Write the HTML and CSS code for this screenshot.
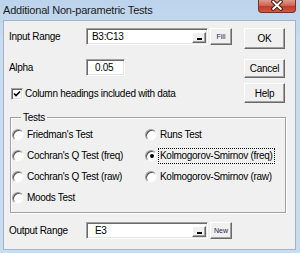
FILE: index.html
```html
<!DOCTYPE html>
<html>
<head>
<meta charset="utf-8">
<link rel="stylesheet" href="styles.css">
</head>
<body>
<div class="window">
  <div class="titlebar">
    <span class="title">Additional Non-parametric Tests</span>
    <div class="close">
      <svg width="38" height="13" viewBox="0 0 38 13">
        <path d="M15.5 1.5 L23.5 9 M23.5 1.5 L15.5 9" stroke="#4a1a14" stroke-width="4" stroke-linecap="round" fill="none"/>
        <path d="M15.5 1.5 L23.5 9 M23.5 1.5 L15.5 9" stroke="#ffffff" stroke-width="2" stroke-linecap="round" fill="none"/>
      </svg>
    </div>
  </div>
  <div class="client">
    <div class="top">
      <div class="fields">
        <div class="row">
          <span class="lbl">Input Range</span>
          <div class="textbox wide"><span class="val v-input">B3:C13</span><span class="pick"><i></i></span></div>
          <span class="mini">Fill</span>
        </div>
        <div class="row r-alpha">
          <span class="lbl">Alpha</span>
          <div class="textbox narrow"><span class="val v-alpha">0.05</span></div>
        </div>
        <div class="check-row">
          <span class="checkbox">
            <svg width="10" height="10" viewBox="0 0 10 10"><path d="M2 4.5 L4 6.5 L8 2.5" stroke="#000" stroke-width="1.6" fill="none"/></svg>
          </span>
          <span>Column headings included with data</span>
        </div>
      </div>
      <div class="buttons">
        <span class="btn b-ok">OK</span>
        <span class="btn b-cancel">Cancel</span>
        <span class="btn b-help">Help</span>
      </div>
    </div>
    <div class="group">
      <span class="legend">Tests</span>
      <div class="options">
        <div class="opt"><span class="radio"></span><span>Friedman's Test</span></div>
        <div class="opt"><span class="radio"></span><span>Runs Test</span></div>
        <div class="opt"><span class="radio"></span><span>Cochran's Q Test (freq)</span></div>
        <div class="opt"><span class="radio on"></span><span class="focus">Kolmogorov-Smirnov (freq)</span></div>
        <div class="opt"><span class="radio"></span><span>Cochran's Q Test (raw)</span></div>
        <div class="opt"><span class="radio"></span><span>Kolmogorov-Smirnov (raw)</span></div>
        <div class="opt"><span class="radio"></span><span>Moods Test</span></div>
      </div>
    </div>
    <div class="row r-output">
      <span class="lbl">Output Range</span>
      <div class="textbox wide"><span class="val v-output">E3</span><span class="pick"><i></i></span></div>
      <span class="mini">New</span>
    </div>
  </div>
</div>
</body>
</html>
```

FILE: styles.css
```css
html, body {
  margin: 0;
  padding: 0;
  background: #c6daef;
}
.window {
  width: 300px;
  height: 253px;
  background: linear-gradient(#bcd3ec, #c9dcf0 40px, #c9dcf0);
  font-family: "Liberation Sans", Arial, sans-serif;
  font-size: 10px;
  letter-spacing: -0.3px;
  color: #000;
  overflow: hidden;
}
.titlebar {
  height: 20px;
  display: flex;
  align-items: flex-start;
}
.title {
  font-size: 11px;
  letter-spacing: -0.2px;
  line-height: 14px;
  padding: 3px 0 0 3px;
  color: #1a1a1a;
}
.close {
  margin-left: auto;
  margin-right: 4px;
  width: 38px;
  height: 13px;
  box-sizing: border-box;
  border: 1px solid #7a2e24;
  border-top: none;
  border-radius: 0 0 4px 4px;
  background: linear-gradient(#e09a8a, #d06656 45%, #c23a2a 55%, #d05a44);
  display: flex;
}
.close svg {
  margin-left: -1px;
}
.client {
  width: 293px;
  height: 230px;
  margin-left: 3px;
  box-sizing: border-box;
  border: 1px solid #a3b2c4;
  background: #f0f0f0;
}
.top {
  display: flex;
  padding-top: 7px;
}
.fields {
  width: 240px;
}
.row {
  display: flex;
  align-items: center;
  height: 17px;
}
.lbl {
  width: 77px;
  margin-left: 5px;
  flex: none;
}
.textbox {
  height: 17px;
  box-sizing: border-box;
  background: #fff;
  border-style: solid;
  border-width: 1px;
  border-color: #a0a0a0 #ffffff #ffffff #a0a0a0;
  box-shadow: inset 1px 1px 0 #696969, inset -1px -1px 0 #e3e3e3;
  display: flex;
  align-items: center;
  flex: none;
}
.textbox.wide { width: 122px; }
.textbox.narrow { width: 39px; }
.val {
  flex: 1;
  line-height: 13px;
}
.v-input { padding-left: 5px; }
.v-alpha { padding-left: 8px; }
.v-output { padding-left: 8px; }
.pick {
  width: 14px;
  height: 11px;
  align-self: flex-end;
  margin: 0 1px 1px 0;
  box-sizing: border-box;
  background: #f0f0f0;
  border-style: solid;
  border-width: 1px;
  border-color: #ffffff #696969 #696969 #ffffff;
  box-shadow: inset -1px -1px 0 #a0a0a0;
  display: flex;
  justify-content: center;
  align-items: flex-end;
}
.pick i {
  display: block;
  width: 5px;
  height: 2px;
  background: #000;
  margin-bottom: 2px;
}
.mini {
  width: 22px;
  height: 17px;
  margin-left: 2px;
  box-sizing: border-box;
  background: #f0f0f0;
  border-style: solid;
  border-width: 1px;
  border-color: #ffffff #696969 #696969 #ffffff;
  box-shadow: inset -1px -1px 0 #a0a0a0;
  font-size: 7px;
  letter-spacing: 0;
  color: #1c2450;
  display: flex;
  align-items: center;
  justify-content: center;
  flex: none;
}
.r-alpha { margin-top: 14px; }
.check-row {
  display: flex;
  align-items: center;
  height: 13px;
  margin-top: 11px;
}
.checkbox {
  width: 12px;
  height: 12px;
  margin-left: 7px;
  margin-right: 2px;
  box-sizing: border-box;
  background: #fff;
  border-style: solid;
  border-width: 1px;
  border-color: #a0a0a0 #ffffff #ffffff #a0a0a0;
  box-shadow: inset 1px 1px 0 #696969, inset -1px -1px 0 #e3e3e3;
  display: flex;
  align-items: center;
  justify-content: center;
}
.buttons {
  width: 41px;
  display: flex;
  flex-direction: column;
}
.btn {
  width: 41px;
  box-sizing: border-box;
  background: #f0f0f0;
  border-style: solid;
  border-width: 1px;
  border-color: #ffffff #696969 #696969 #ffffff;
  box-shadow: inset -1px -1px 0 #a0a0a0;
  display: flex;
  align-items: center;
  justify-content: center;
}
.b-ok { height: 21px; }
.b-cancel { height: 19px; margin-top: 10px; }
.b-help { height: 20px; margin-top: 5px; }
.group {
  position: relative;
  margin: 14px 0 0 6px;
  width: 276px;
  height: 96px;
  box-sizing: border-box;
  border: 1px solid #a0a0a0;
  box-shadow: inset 1px 1px 0 #ffffff, 1px 1px 0 #ffffff;
}
.legend {
  position: absolute;
  top: -7px;
  left: 10px;
  padding: 0 2px;
  line-height: 13px;
  background: #f0f0f0;
}
.options {
  display: grid;
  grid-template-columns: 133px 1fr;
  grid-auto-rows: 21px;
  padding: 6px 0 0 1px;
}
.opt {
  display: flex;
  align-items: center;
}
.radio {
  width: 12px;
  height: 12px;
  margin-right: 3px;
  box-sizing: border-box;
  border-radius: 50%;
  background: #fff;
  border-style: solid;
  border-width: 1px;
  border-color: #9a9a9a #f4f4f4 #f4f4f4 #9a9a9a;
  box-shadow: inset 1px 1px 0 #505050;
  display: flex;
  align-items: center;
  justify-content: center;
  flex: none;
}
.radio.on::after {
  content: "";
  width: 4px;
  height: 4px;
  border-radius: 50%;
  background: #000;
  margin: 1px 0 0 1px;
}
.focus {
  outline: 1px dotted #000;
  outline-offset: 1px;
  line-height: 12px;
}
.r-output { margin-top: 9px; }
```
